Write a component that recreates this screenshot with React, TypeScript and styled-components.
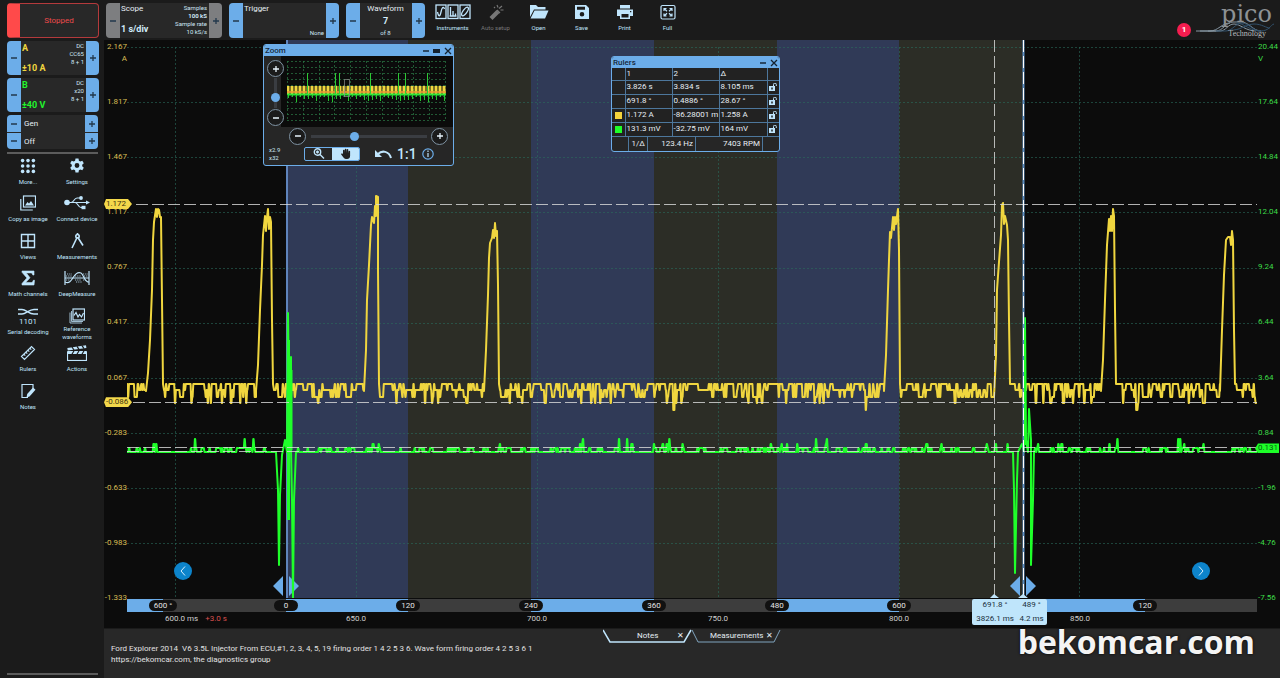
import React from "react";
import styled, { createGlobalStyle, css } from "styled-components";

const blue = "#6cade9";
const pale = "#c0e5fc";
const panel = "#282828";
const ui = 'Roboto, "Open Sans", sans-serif';

const Global = createGlobalStyle`
  * { box-sizing: border-box; }
  body { margin: 0; background: #1b1b1b; color: #e6eef4; font: 8px/10px ${ui}; }
  button, textarea, input { font: inherit; color: inherit; }
  button { padding: 0; border: 0; background: none; cursor: pointer; }
`;

/* ---------- page frame ---------- */

const Page = styled.div`
  display: grid;
  grid-template-columns: 104px minmax(0, 1fr);
  min-height: 100vh;
`;

const Sidebar = styled.aside`
  display: flex;
  flex-direction: column;
  padding: 3px 6px 3px 7px;
  gap: 3px;
`;

const Main = styled.main`
  display: grid;
  grid-template-rows: 40px minmax(0, 1fr) 50px;
  min-width: 0;
`;

const Toolbar = styled.header`
  display: flex;
  padding: 3px 6px 0 2px;
`;

/* ---------- channel and scope boxes ---------- */

const StopButton = styled.button`
  height: 35px;
  width: 92px;
  border: 1px solid #b43a3c;
  border-left: 13px solid #ff4a4a;
  border-radius: 4px;
  background: ${panel};
  color: #ec4a4b;
`;

const Box = styled.section<{ $w: number; $h?: number; $gap?: number }>`
  display: grid;
  grid-template-columns: 14px minmax(0, 1fr) 13px;
  width: ${(p) => p.$w}px;
  height: ${(p) => p.$h ?? 35}px;
  margin-right: ${(p) => p.$gap ?? 0}px;
  border-radius: 4px;
  overflow: hidden;
  background: ${panel};
`;

const Step = styled.button<{ $grey?: boolean }>`
  display: grid;
  place-items: center;
  background: ${(p) => (p.$grey ? "#7d7e80" : blue)};
  color: #22384c;
`;

const BoxBody = styled.div<{ $center?: boolean }>`
  display: flex;
  justify-content: ${(p) => (p.$center ? "center" : "space-between")};
  padding: 1px 2px 1px 1px;
  min-width: 0;
`;

const Stack = styled.div<{ $align?: string; $color?: string; $spread?: boolean }>`
  display: flex;
  flex-direction: column;
  align-items: ${(p) => p.$align ?? "flex-start"};
  justify-content: ${(p) => (p.$spread ? "space-between" : "flex-start")};
  color: ${(p) => p.$color ?? "#e6eef4"};
  white-space: nowrap;
`;

const Small = styled.span<{ $bold?: boolean }>`
  font-size: 6px;
  line-height: 8px;
  font-weight: ${(p) => (p.$bold ? 700 : 400)};
  color: #cfe6f5;
`;

const Value = styled.strong<{ $pale?: boolean }>`
  font-size: 9px;
  font-weight: 700;
  line-height: 12px;
  margin-bottom: ${(p) => (p.$pale ? 2 : 0)}px;
  color: ${(p) => (p.$pale ? "#d3edfc" : "inherit")};
`;

const GenBox = styled.section`
  display: grid;
  grid-template-columns: 14px minmax(0, 1fr) 13px;
  grid-template-rows: 17px 16px;
  row-gap: 1px;
  border-radius: 4px;
  overflow: hidden;
  background: ${panel};
`;

const GenText = styled.span`
  padding-left: 3px;
  line-height: 17px;
`;

const Rule = styled.hr`
  width: 91px;
  height: 2px;
  margin: 0;
  border: 0;
  background: #5c5c5c;
`;

/* ---------- tool buttons ---------- */

const ToolGrid = styled.nav`
  display: grid;
  grid-template-columns: 42px 56px;
  grid-template-rows: repeat(7, 1fr);
  height: 262px;
  margin: 1px 0 auto;
`;

const Tool = styled.button<{ $w?: number; $dim?: boolean; $tight?: boolean }>`
  display: flex;
  flex-direction: column;
  align-items: center;
  width: ${(p) => (p.$w ? p.$w + "px" : "auto")};
  color: ${(p) => (p.$dim ? "#777" : pale)};
  font-size: 6px;
  line-height: 8px;
  white-space: pre;
  svg { display: block; flex: none; margin-bottom: ${(p) => (p.$tight ? 1 : 4)}px; }
`;

const ToolRow = styled.nav`
  display: flex;
  margin-left: 6px;
`;

const Brand = styled.div`
  position: relative;
  margin-left: auto;
  width: 80px;
`;

const Wordmark = styled.span`
  position: absolute;
  right: 2px;
  top: -2px;
  font: 24px/26px "DejaVu Serif", serif;
  color: #8d9194;
`;

const Tagline = styled.span`
  position: absolute;
  right: 8px;
  top: 26px;
  font: 8px/10px "Liberation Serif", serif;
  color: #b9bcbe;
`;

const Waves = styled.svg`
  position: absolute;
  left: 2px;
  top: 16px;
`;

const Alert = styled.span`
  position: absolute;
  left: -17px;
  top: 20px;
  width: 14px;
  height: 14px;
  border-radius: 50%;
  background: #f51d4f;
  color: #fff;
  font-weight: 700;
  line-height: 14px;
  text-align: center;
`;

/* ---------- chart ---------- */

const Chart = styled.section`
  position: relative;
  display: grid;
  grid-template-columns: 23px minmax(0, 1fr) 23px;
  grid-template-rows: minmax(0, 1fr) 14px 16px;
  background: #0c0c0c;
  min-height: 400px;
`;

const Axis = styled.div<{ $side: "left" | "right" }>`
  display: flex;
  flex-direction: column;
  justify-content: space-between;
  margin: 2px 0 -5px;
  color: ${(p) => (p.$side === "left" ? "#d9bd55" : "#3ddb48")};
  white-space: nowrap;
`;

const Mark = styled.span<{ $side: "left" | "right" }>`
  display: flex;
  flex-direction: column;
  align-items: ${(p) => (p.$side === "left" ? "flex-end" : "flex-start")};
  gap: 2px;
  height: 10px;
  padding-left: 1px;
`;

const PlotArea = styled.div`
  position: relative;
  min-width: 0;
  svg { position: absolute; inset: 0; width: 100%; height: 100%; }
  path, line { vector-effect: non-scaling-stroke; }
`;

const Strip = styled.div`
  position: relative;
  grid-column: 2;
  display: flex;
  margin-top: 1px;
`;

const Segment = styled.div<{ $grow: number; $on?: boolean }>`
  display: flex;
  align-items: center;
  flex: ${(p) => p.$grow} 1 0;
  width: 0;
  background: ${(p) => (p.$on ? blue : "#3d3d3d")};
`;

const Anchor = styled.span`
  display: flex;
  flex: none;
  justify-content: center;
  width: 0;
  z-index: 1;
`;

const Pill = styled.span`
  flex: none;
  min-width: 24px;
  padding: 0 5px;
  border-radius: 6px;
  background: #111;
  color: #e4e4e4;
  line-height: 11px;
  text-align: center;
  white-space: nowrap;
`;

const TimeRow = styled.div`
  grid-column: 2;
  display: flex;
  align-items: center;
  padding-bottom: 2px;
  color: #d0d0d0;
`;

const TimeCell = styled.div<{ $grow: number }>`
  display: flex;
  flex: ${(p) => p.$grow} 1 0;
  width: 0;
`;

const TimeLabel = styled.span`
  flex: none;
  white-space: nowrap;
`;

const Trail = styled.span`
  display: flex;
  gap: 7px;
  padding-left: 12px;
  white-space: nowrap;
  em { font-style: normal; color: #d8504e; }
`;

const FlagSpot = styled.div<{ $top: number }>`
  position: absolute;
  left: -23px;
  right: -22px;
  top: ${(p) => p.$top}%;
  display: flex;
  margin-top: -5px;
`;

const Flag = styled.span<{ $green?: boolean }>`
  line-height: 10px;
  ${(p) =>
    p.$green
      ? css`width: 24px; margin-left: auto; padding-left: 3px; background: #1dff28; color: #0a5a10;
          clip-path: polygon(0 50%, 3px 0, 100% 0, 100% 100%, 3px 100%);`
      : css`width: 28px; padding-left: 2px; background: #f3d84b; color: #3d3410;
          clip-path: polygon(2px 0, 24px 0, 100% 50%, 24px 100%, 2px 100%, 0 50%);`}
`;

const RulerCard = styled.div`
  position: absolute;
  z-index: 3;
  left: 74.75%;
  top: 0;
  width: 75px;
  height: 26px;
  padding: 1px 3px;
  display: grid;
  grid-template-columns: 1fr auto;
  column-gap: 4px;
  justify-items: center;
  align-content: space-between;
  border-radius: 2px;
  background: #bfe5fb;
  color: #20303c;
  white-space: nowrap;
`;

const PageButton = styled.button<{ $side: "left" | "right" }>`
  position: absolute;
  z-index: 2;
  bottom: 18px;
  ${(p) => (p.$side === "left" ? "left: 47px;" : "right: 47px;")}
  width: 18px;
  height: 18px;
  border-radius: 50%;
  background: #0d84cb;
  display: grid;
  place-items: center;
  && svg { position: static; width: 10px; height: 12px; }
`;

/* ---------- floating windows ---------- */

const Win = styled.section<{ $x: number; $y: number; $w: number }>`
  position: absolute;
  z-index: 5;
  left: ${(p) => p.$x}px;
  top: ${(p) => p.$y}px;
  width: ${(p) => p.$w}px;
  border: 1px solid ${blue};
  border-radius: 3px;
  background: #262626;
  overflow: hidden;
`;

const WinBar = styled.header`
  display: flex;
  align-items: center;
  height: 11px;
  padding: 0 0 0 1px;
  background: ${blue};
  color: #16283a;
  h2 { margin: 0 auto 0 0; font: inherit; font-weight: 500; }
  button { display: grid; place-items: center; width: 11px; height: 11px; }
`;

const ZoomTop = styled.div`
  display: grid;
  grid-template-columns: 17px 1fr;
  height: 71px;
`;

const ZoomSide = styled.div`
  display: flex;
  flex-direction: column;
  align-items: center;
  justify-content: space-between;
  margin: 4px -5px 1px 1px;
  z-index: 1;
`;

const Overview = styled.div`
  padding: 5px 6px;
  background: #0b0b0b;
  svg { display: block; }
`;

const Round = styled.button`
  display: grid;
  place-items: center;
  flex: none;
  width: 17px;
  height: 17px;
  border: 1px solid #7f93a3;
  border-radius: 50%;
  background: #1b1b1b;
  color: #e8f4fc;
`;

const thumb = css`
  appearance: none;
  width: 9px;
  height: 9px;
  border: 0;
  border-radius: 50%;
  background: ${blue};
`;

const Slider = styled.input<{ $vertical?: boolean }>`
  appearance: none;
  margin: 0;
  background: transparent;
  ${(p) =>
    p.$vertical
      ? css`writing-mode: vertical-lr; direction: rtl; width: 9px; height: 30px;`
      : css`width: 116px; height: 9px;`}
  &::-webkit-slider-runnable-track {
    background: linear-gradient(#3a3d42, #3a3d42) center / ${(p) => (p.$vertical ? "3px 100%" : "100% 3px")} no-repeat;
  }
  &::-webkit-slider-thumb { ${thumb} }
`;

const ZoomRow = styled.div`
  display: flex;
  align-items: center;
  justify-content: space-between;
  height: 18px;
  padding: 0 5px 0 25px;
`;

const ZoomFoot = styled.div`
  display: grid;
  grid-template-columns: 30px 56px auto auto auto;
  column-gap: 5px;
  justify-content: start;
  align-items: center;
  height: 20px;
  padding: 0 0 3px 5px;
`;

const Toggle = styled.div`
  display: flex;
  border: 1px solid ${blue};
  border-radius: 2px;
  overflow: hidden;
`;

const ToggleButton = styled.button<{ $on?: boolean }>`
  display: grid;
  place-items: center;
  flex: 1;
  height: 12px;
  background: ${(p) => (p.$on ? pale : "transparent")};
  color: ${(p) => (p.$on ? "#222" : pale)};
`;

const FootButton = styled.button<{ $first?: boolean }>`
  display: grid;
  place-items: center;
  margin-left: ${(p) => (p.$first ? 10 : 0)}px;
  color: ${pale};
  font-size: 14px;
  font-weight: 500;
  line-height: 14px;
`;

const RulerTable = styled.table`
  width: 100%;
  table-layout: fixed;
  border-collapse: collapse;
  line-height: 12px;
  th, td {
    height: 14px;
    padding: 0 1px;
    border: 1px solid #4d779c;
    text-align: left;
    font-weight: 400;
    white-space: nowrap;
    overflow: hidden;
    background: #222;
  }
  th { height: 12px; line-height: 10px; border-top: 0; }
  tr > :first-child { border-left: 0; }
  tr > :last-child { border-right: 0; }
  svg { display: block; margin: auto; }
`;

const Swatch = styled.span<{ $c: string }>`
  display: block;
  width: 7px;
  height: 7px;
  margin: auto;
  background: ${(p) => p.$c};
`;

const RulerFoot = styled.div`
  display: grid;
  grid-template-columns: 20px 48px 67px;
  padding: 0 17px 0 16px;
  height: 14px;
  line-height: 14px;
  span { border-right: 1px solid #4d779c; text-align: right; padding-right: 2px; }
  span:first-child { border-left: 1px solid #4d779c; }
`;

/* ---------- notes ---------- */

const Notes = styled.section`
  position: relative;
  display: grid;
  grid-template-rows: 14px 1fr;
  border-top: 1px solid #1b1b1b;
  background: ${panel};
`;

const Tabs = styled.div`
  display: flex;
  justify-content: center;
`;

const TabItem = styled.div<{ $w: number; $on?: boolean }>`
  position: relative;
  display: flex;
  align-items: center;
  justify-content: space-between;
  width: ${(p) => p.$w}px;
  padding: 0 8px 0 ${(p) => (p.$on ? 34 : 18)}px;
  svg { position: absolute; inset: 0; }
  button { position: relative; }
`;

const NoteText = styled.textarea`
  padding: 0 7px;
  border: 0;
  resize: none;
  outline: 0;
  background: transparent;
  line-height: 11px;
  color: #e2e2e2;
  overflow: hidden;
`;

const Watermark = styled.strong`
  position: absolute;
  right: 25px;
  bottom: 21px;
  font: 700 32px/30px "Open Sans", sans-serif;
  color: #f4f4f4;
  text-shadow: 0 0 3px #000;
`;

/* ---------- icons ---------- */

const Plus = () => (
  <svg width="8" height="8" viewBox="0 0 8 8" stroke="currentColor" strokeWidth="1.3"><path d="M1 4h6M4 1v6" /></svg>
);
const Minus = () => (
  <svg width="8" height="8" viewBox="0 0 8 8" stroke="currentColor" strokeWidth="1.3"><path d="M1 4h6" /></svg>
);

const Ico = ({ children, w = 16, h = 16, vb = "0 0 16 16", sw = 1.2 }: { children: React.ReactNode; w?: number; h?: number; vb?: string; sw?: number }) => (
  <svg width={w} height={h} viewBox={vb} fill="none" stroke="currentColor" strokeWidth={sw}>{children}</svg>
);

const icons: Record<string, React.ReactNode> = {
  more: <Ico><g fill="currentColor" stroke="none">{[2.6, 8, 13.4].flatMap((y) => [2.6, 8, 13.4].map((x) => <circle key={x + "-" + y} cx={x} cy={y} r="1.8" />))}</g></Ico>,
  settings: <Ico><path fill="currentColor" stroke="none" fillRule="evenodd" d="M6.500.6h3l.4 2.100 1.400.8 2-.8 1.500 2.600-1.600 1.400v1.600l1.600 1.400-1.500 2.600-2-.8-1.400.8-.4 2.100h-3l-.4-2.100-1.400-.8-2 .8L1.200 9.700 2.800 8.300V6.700L1.200 5.300l1.500-2.600 2 .8 1.400-.8zM8 5.100a2.400 2.400 0 1 0 0 4.800 2.400 2.400 0 0 0 0-4.800z" /></Ico>,
  copy: <Ico><rect x="3.5" y="1" width="12" height="11" /><path d="M.8 4v11h12" /><path d="M5 10.500l2.500-3.500 1.500 1.500L11 6l3 4.500z" fill="currentColor" stroke="none" /></Ico>,
  usb: <Ico w={28} vb="0 0 28 16"><circle cx="4" cy="7.5" r="2.8" fill="currentColor" stroke="none" /><path d="M4 7.500h20M8 7.500c3 0 3-4.500 6-4.500h3M12 7.500c3 0 3 5 6 5h2" /><path d="M27 7.500l-4-2v4z" fill="currentColor" stroke="none" /><circle cx="18" cy="3" r="1.9" fill="currentColor" stroke="none" /><rect x="18.500" y="10.800" width="4" height="3.400" fill="currentColor" stroke="none" /></Ico>,
  views: <Ico sw={1.4}><path d="M1.500 1.500h13v13h-13zM8 1.500v13M1.500 8h13" /></Ico>,
  compass: <Ico sw={1.6}><circle cx="8.5" cy="3.2" r="1.7" /><path d="M7.800 5L3 15M9.200 5L14 12.500M8.500 1V0" /></Ico>,
  sigma: <Ico><path fill="currentColor" stroke="currentColor" strokeWidth=".6" d="M2 1h12v4h-1.200C12.500 3.500 12 2.900 10.500 2.900H6.300L10 7.800 5.700 12.600h5.200c1.500 0 2-.7 2.400-2.300h1.200L14 15H2v-1.500l4.900-5.600L2 2.300z" /></Ico>,
  deep: <Ico w={26} vb="0 0 26 16" sw={1.2}><path d="M1 1v14M25 1v14M1 8h24" /><path d="M1 12C5 14 7 11 9.500 7S14 1.500 17 3s3 9 8 9" /><path d="M2 6h6M3 4h5M2 10h4M11 10h6M12 12h6M20 6h4M19 4h5M11 6h6M19 10h3" strokeDasharray="1.2 1" strokeWidth=".8" /></Ico>,
  serial: <Ico w={20} vb="0 0 20 16"><path d="M0 1.500h4c4 0 7 4.500 12 4.500h4M0 6h4c4 0 7-4.500 12-4.500h4" strokeWidth="1.5" /><text x="10" y="15.5" fontSize="8" textAnchor="middle" fill="currentColor" stroke="none">1101</text></Ico>,
  refw: <Ico><rect x="4" y="1" width="11.5" height="11" /><path d="M1 4.500V15h12M2.500 3v10.500H14" strokeWidth=".8" /><path d="M5 7.500l2-3 2 4.500 1.500-2.500L12.500 9 14.500 5" /></Ico>,
  ruler: <Ico><path d="M1.500 11.500l10-10 3 3-10 10zM4 9.300l1.300 1.300M6 7.300l1.300 1.300M8 5.300l1.300 1.300M10 3.300l1.300 1.300" /></Ico>,
  actions: <Ico w={20} vb="0 0 20 16"><rect x="0.5" y="7" width="19" height="8.5" /><rect x="0.5" y="6" width="19" height="3" fill="currentColor" stroke="none" /><path d="M.3 3L19 .3l.4 2.700L.8 5.600z" fill="currentColor" stroke="none" /><path d="M5 2l2 3M10 1.300l2 3M15 .6l2 3M5 9l2-3M10 9l2-3M15 9l2-3" stroke="#1b1b1b" /></Ico>,
  notes: <Ico><path d="M13 8V1.500H2v13h6" /><path d="M6.500 14.500l.7-3.500L13 4.500l2.500 2.300-6 6.700z" fill="currentColor" stroke="none" /></Ico>,
  instruments: <Ico w={36} h={17} vb="0 0 36 17" sw={1.3}><rect x="1" y="2" width="10" height="13.5" /><rect x="13" y="2" width="10" height="13.5" /><rect x="25" y="2" width="10" height="13.5" /><path d="M2.500 9c1 5 2.500 5 3.500 0S8.500 3 9.500 6M15.500 4v9M18 8v5M20.500 10.500V13M14.500 13h7" /><ellipse cx="30" cy="8.500" rx="2" ry="5" transform="rotate(35 30 8.500)" /></Ico>,
  auto: <Ico h={17}><path d="M1.500 13.500L8.500 6.500l3 3-7 7z" fill="currentColor" stroke="none" /><path d="M9 6.500l3 3M11 5l3-2.500M10 4l-1-2.500M12.500 6.500h3M6 3.500l1 1" /></Ico>,
  open: <Ico w={20} h={17} vb="0 0 20 17"><path d="M1 14V2h6l2 2h7.500v2.500H5z" fill="currentColor" stroke="none" /><path d="M1.500 15.500L5.500 7.500h14L16 15.500z" fill="currentColor" stroke="none" /></Ico>,
  save: <Ico h={17}><path fill="currentColor" stroke="none" fillRule="evenodd" d="M1 1.500h11l3 3v11H1zM3 3.300v3h8v-3zM8 8.500a2.300 2.300 0 1 0 0 4.600A2.300 2.300 0 0 0 8 8.500z" /></Ico>,
  print: <Ico h={17}><path fill="currentColor" stroke="none" fillRule="evenodd" d="M3 1.500h10V5H3zM0 6h16v6.500h-3v3H3v-3H0zM4.500 10.500V14h7v-3.500zM13 7.500v1.300h1.300V7.500z" /></Ico>,
  full: <Ico h={17}><rect x="1" y="2" width="14" height="13.5" rx="1.500" /><path d="M4 7.500V5h2.500M4.300 5.300L7 7.800M9.500 5H12v2.500M11.700 5.300L9 7.800M4 10v2.500h2.500M4.300 12.200L7 9.700M9.500 12.500H12V10M11.700 12.200L9 9.700" /></Ico>,
};

const sideTools: [string, string][] = [
  ["more", "More..."], ["settings", "Settings"],
  ["copy", "Copy as image"], ["usb", "Connect device"],
  ["views", "Views"], ["compass", "Measurements"],
  ["sigma", "Math channels"], ["deep", "DeepMeasure"],
  ["serial", "Serial decoding"], ["refw", "Reference\nwaveforms"],
  ["ruler", "Rulers"], ["actions", "Actions"],
  ["notes", "Notes"],
];

const topTools: [string, string][] = [
  ["instruments", "Instruments"], ["auto", "Auto setup"], ["open", "Open"],
  ["save", "Save"], ["print", "Print"], ["full", "Full"],
];

/* ---------- signal data ---------- */

function random(seed: number) {
  let s = seed;
  return () => {
    s = (s * 1664525 + 1013904223) >>> 0;
    return s / 4294967296;
  };
}

type Pt = [number, number];

const pulses: Pt[][] = [
  [[146, 391], [148, 373], [150, 340], [152, 290], [153, 240], [154, 222], [156, 209], [157, 217], [158, 209], [159, 210], [160, 217], [161, 217], [162, 300], [163, 384]],
  [[256, 391], [258, 365], [260, 310], [262, 265], [263, 235], [265, 216], [266, 231], [267, 217], [268, 209], [269, 229], [270, 217], [271, 222], [272, 320], [273, 384]],
  [[364, 391], [366, 350], [367, 300], [369, 265], [371, 225], [372, 217], [374, 223], [375, 206], [376, 216], [376, 196], [378, 197], [378, 270], [379, 384]],
  [[484, 391], [486, 350], [488, 295], [489, 258], [490, 243], [492, 238], [493, 230], [494, 238], [495, 223], [496, 236], [497, 231], [498, 285], [499, 384]],
  [[884, 391], [886, 355], [888, 290], [889, 260], [890, 232], [891, 238], [893, 217], [894, 230], [895, 217], [896, 224], [898, 209], [899, 250], [900, 384]],
  [[994, 397], [996, 355], [997, 290], [999, 262], [1001, 235], [1002, 205], [1003, 203], [1004, 224], [1005, 216], [1007, 225], [1008, 240], [1009, 320], [1010, 384]],
  [[1101, 391], [1103, 360], [1105, 300], [1107, 245], [1109, 219], [1110, 231], [1111, 216], [1112, 231], [1113, 209], [1114, 216], [1115, 310], [1116, 384]],
  [[1220, 391], [1222, 330], [1224, 275], [1226, 240], [1228, 237], [1230, 237], [1231, 245], [1232, 231], [1233, 240], [1234, 330], [1235, 384]],
];

const kicks: Pt[][] = [
  [[276, 452], [278, 490], [279, 565], [280, 495], [282, 455], [285, 440], [287, 452], [288, 313], [289, 395], [290, 410], [291, 357], [291, 450], [292, 500], [293, 598], [294, 500], [296, 452]],
  [[1013, 452], [1014, 490], [1015, 573], [1017, 480], [1018, 452], [1022, 444], [1024, 452], [1025, 318], [1026, 440], [1028, 452], [1029, 409], [1031, 440], [1031, 565], [1033, 500], [1034, 452]],
];

/* Each level is [share of samples, y, longest run in px]. */
type Level = [number, number, number];

function trace(seed: number, shapes: Pt[][], levels: Level[]) {
  const r = random(seed);
  const out: Pt[] = [];
  let x = 127;
  let i = 0;
  while (x < 1257) {
    const shape = shapes[i];
    if (shape && x >= shape[0][0]) {
      out.push(...shape);
      x = shape[shape.length - 1][0] + 1;
      i += 1;
      continue;
    }
    let pick = r();
    const [, y, run] = levels.find(([share]) => (pick -= share) < 0) ?? levels[0];
    const end = Math.min(x + 0.3 + (r() < 0.25 ? r() * run : 0), shape ? shape[0][0] : 1257);
    out.push([x, y], [end, y]);
    x = end + 0.7;
  }
  return "M" + out.map(([a, b]) => `${a.toFixed(1)} ${b}`).join("L");
}

const currentTrace = trace(57, pulses, [[0.4, 384, 5], [0.3, 390, 3], [0.23, 397, 2], [0.062, 403, 1], [0.008, 410, 1]]);
const voltTrace = trace(23, kicks, [[0.61, 452, 7], [0.31, 448, 2], [0.065, 444, 1], [0.015, 439, 0]]);

const bands: [number, number, string][] = [
  [286, 122, "#303a57"], [408, 123, "#2c2d26"], [531, 123, "#303a57"],
  [654, 123, "#2c2d26"], [777, 122, "#303a57"], [899, 124, "#2c2d26"],
];

const gridX = [175.5, 356.5, 537.5, 718.5, 899.5, 1079.5];
const gridY = [47.5, 102.5, 157.5, 212.5, 268.5, 323.5, 378.5, 433.5, 488.5, 543.5];

function Signals() {
  return (
    <svg viewBox="127 40 1130 558" preserveAspectRatio="none" role="img" aria-label="Injector current and voltage">
      {bands.map(([x, w, c]) => <rect key={x} x={x} y="40" width={w} height="558" fill={c} />)}
      <g stroke="#2a6b5c" strokeOpacity=".6" strokeDasharray="2 2">
        {gridX.map((x) => <line key={x} x1={x} x2={x} y1="47" y2="598" />)}
        {gridY.map((y) => <line key={y} x1="127" x2="1257" y1={y} y2={y} />)}
      </g>
      <path d="M287 40V598" stroke="#5f84bb" strokeWidth="2" />
      <path d="M273 586l10-10v20zM299 586l-10-10v20zM1010 586l10-10v20zM1036 586l-10-10v20z" fill={blue} />
      <g fill="none" strokeLinejoin="round" strokeWidth="2">
        <path d={currentTrace} stroke="#f0d63f" />
        <path d={voltTrace} stroke="#1fff2a" />
      </g>
      <path d="M288.500 340v180M291 370v80" stroke="#1fff2a" strokeWidth="3" />
      <path d="M1023.500 40V598" stroke="#5d8fc4" strokeWidth="2" />
      <path d="M1025 330v115" stroke="#1fff2a" strokeWidth="2" />
      <g stroke="#dcdcdc" strokeOpacity=".8" strokeDasharray="12 4">
        <path d="M136 204.500H1257M133 402.500H1257M127 447.500H1257M127 451.500H1257M994.500 40V598" />
      </g>
      <path d="M1023.500 40V598" stroke="#fff" strokeDasharray="12 4" />
      <path d="M990 598l4-4 5 4zM1018 598l5-4 5 4z" fill="#bfe5fb" />
    </svg>
  );
}

function OverviewPlot() {
  const r = random(9);
  const bars: string[] = [];
  const dips: string[] = [];
  for (let x = 1; x < 158; x += 4) {
    bars.push(`M${x} 25v9`);
    dips.push(`M${x + 0.5} 34v${Math.round(2 + r() * 5)}`);
  }
  return (
    <svg width="159" height="60" viewBox="0 0 159 60" fill="none" role="img" aria-label="Whole capture">
      <g stroke="#2b7a46" strokeDasharray="2 2" strokeOpacity=".7">
        {Array.from({ length: 11 }, (_, i) => <path key={"x" + i} d={`M${Math.round(i * 15.8) + 0.5} 0V59`} />)}
        {Array.from({ length: 11 }, (_, i) => <path key={"y" + i} d={`M0 ${Math.round(i * 5.9) + 0.5}H159`} />)}
      </g>
      <path d={bars.join("")} stroke="#f0d63f" strokeWidth="3" />
      <path d="M0 31H159" stroke="#e79a35" strokeOpacity=".8" strokeWidth="2" />
      <path d={dips.join("")} stroke="#22c92c" strokeWidth="1" />
      <path d="M20.500 12v22M48.500 12v22M52.500 12v22M83.500 12v22M111.500 12v22M118.500 12v22M140.500 12v22" stroke="#2cc934" />
      <path d="M0 33.500H159" stroke="#2fe639" strokeWidth="2" />
      <rect x="57.5" y="18.5" width="5" height="17" stroke="#8d8d8d" strokeOpacity=".7" />
    </svg>
  );
}

/* ---------- parts ---------- */

const leftMarks = ["2.167", "1.817", "1.467", "1.117", "0.767", "0.417", "0.067", "-0.283", "-0.633", "-0.983", "-1.333"];
const rightMarks = ["20.44", "17.64", "14.84", "12.04", "9.24", "6.44", "3.64", "0.84", "-1.96", "-4.76", "-7.56"];

const segments: [number, boolean, string][] = [
  [36, true, ""], [123, false, "600 °"], [122, true, "0"], [123, false, "120"], [123, true, "240"], [123, false, "360"],
  [122, true, "480"], [124, false, "600"], [122, true, ""], [112, false, "120"],
];

const times: [number, string][] = [[48, ""], [181, "600.0"], [181, "650.0"], [181, "700.0"], [181, "750.0"], [181, "800.0"], [177, "850.0"]];

const rulerRows: [string, string, string, string][] = [
  ["", "3.826 s", "3.834 s", "8.105 ms"],
  ["", "691.8 °", "0.4886 °", "28.67 °"],
  ["#f3d33c", "1.172 A", "-86.28001 m", "1.258 A"],
  ["#1fff2a", "131.3 mV", "-32.75 mV", "164 mV"],
];

const Lock = () => (
  <svg width="8" height="8" viewBox="0 0 8 8" fill="none" stroke={pale}><path d="M0 3h6v5H0z" fill={pale} stroke="none" /><path d="M4.500 3V1.500a1.400 1.400 0 0 1 2.800 0V3" /><path d="M3 4.500v2" stroke="#222" strokeWidth="1.5" /></svg>
);

const CloseIcon = () => <svg width="8" height="8" viewBox="0 0 8 8" stroke="#14222f" strokeWidth="1.3"><path d="M1 1l6 6M7 1L1 7" /></svg>;

function Channel({ name, range, color, probe }: { name: string; range: string; color: string; probe: string }) {
  return (
    <Box $w={92} $h={34}>
      <Step aria-label={`Channel ${name} lower range`}><Minus /></Step>
      <BoxBody>
        <Stack $color={color} $spread><Value>{name}</Value><Value>{range}</Value></Stack>
        <Stack $align="flex-end"><Small>DC</Small><Small>{probe}</Small><Small>8 + 1</Small></Stack>
      </BoxBody>
      <Step aria-label={`Channel ${name} higher range`}><Plus /></Step>
    </Box>
  );
}

function ZoomWindow() {
  return (
    <Win $x={159} $y={4} $w={191}>
      <WinBar>
        <h2>Zoom</h2>
        <button aria-label="Minimise"><Minus /></button>
        <button aria-label="Restore"><svg width="7" height="4"><rect width="7" height="4" fill="#14222f" /></svg></button>
        <button aria-label="Close"><CloseIcon /></button>
      </WinBar>
      <ZoomTop>
        <ZoomSide>
          <Round aria-label="Zoom in vertically"><Plus /></Round>
          <Slider $vertical type="range" aria-label="Vertical zoom" defaultValue={30} />
          <Round aria-label="Zoom out vertically"><Minus /></Round>
        </ZoomSide>
        <Overview><OverviewPlot /></Overview>
      </ZoomTop>
      <ZoomRow>
        <Round aria-label="Zoom out"><Minus /></Round>
        <Slider type="range" aria-label="Horizontal zoom" defaultValue={37} />
        <Round aria-label="Zoom in"><Plus /></Round>
      </ZoomRow>
      <ZoomFoot>
        <Stack><Small>x2.9</Small><Small>x32</Small></Stack>
        <Toggle>
          <ToggleButton aria-label="Magnify"><svg width="12" height="11" viewBox="0 0 12 11" fill="none" stroke="currentColor" strokeWidth="1.4"><circle cx="4.5" cy="4" r="3.2" /><path d="M7 6.500l4 4M4.500 2.500v3M3 4h3" /></svg></ToggleButton>
          <ToggleButton $on aria-label="Pan"><svg width="12" height="11" viewBox="0 0 12 11" fill="currentColor"><path d="M3 6V2.500a.8.8 0 0 1 1.600 0V5l.2-3.500a.8.8 0 0 1 1.600 0V5l.3-3.200a.8.8 0 0 1 1.600 0V5.500l.3-2.300a.8.8 0 0 1 1.500 0V8c0 2-1.300 3-3 3H6C4.500 11 3.500 9.500 1.200 6.500c-.4-.8.6-1.400 1.800-.5z" /></svg></ToggleButton>
        </Toggle>
        <FootButton $first aria-label="Undo zoom"><svg width="17" height="10" viewBox="0 0 17 10" fill="none" stroke="currentColor" strokeWidth="2"><path d="M3 5c4-4 11-3 13 4" /><path d="M0 1v7h7z" fill="currentColor" stroke="none" /></svg></FootButton>
        <FootButton>1:1</FootButton>
        <FootButton aria-label="Information"><svg width="12" height="12" viewBox="0 0 12 12" fill="none" stroke={blue} strokeWidth="1.2"><circle cx="6" cy="6" r="5.2" /><path d="M6 5v4M6 2.600v1.400" stroke={pale} /></svg></FootButton>
      </ZoomFoot>
    </Win>
  );
}

function RulersWindow() {
  return (
    <Win $x={507} $y={16} $w={169}>
      <WinBar>
        <h2>Rulers</h2>
        <button aria-label="Minimise"><Minus /></button>
        <button aria-label="Close"><CloseIcon /></button>
      </WinBar>
      <RulerTable>
        <colgroup><col width="13" /><col width="47" /><col width="47" /><col width="48" /><col width="12" /></colgroup>
        <thead><tr><th /><th>1</th><th>2</th><th>Δ</th><th /></tr></thead>
        <tbody>
          {rulerRows.map(([c, a, b, d]) => (
            <tr key={a}><td>{c && <Swatch $c={c} />}</td><td>{a}</td><td>{b}</td><td>{d}</td><td><Lock /></td></tr>
          ))}
        </tbody>
      </RulerTable>
      <RulerFoot><span>1/Δ</span><span>123.4 Hz</span><span>7403 RPM</span></RulerFoot>
    </Win>
  );
}

export default function App() {
  return (
    <>
      <Global />
      <Page>
        <Sidebar>
          <StopButton>Stopped</StopButton>
          <Channel name="A" range="±10 A" color="#f0d63f" probe="CC65" />
          <Channel name="B" range="±40 V" color="#22f52d" probe="x20" />
          <GenBox>
            <Step aria-label="Previous generator mode"><Minus /></Step><GenText>Gen</GenText><Step aria-label="Next generator mode"><Plus /></Step>
            <Step aria-label="Lower generator output"><Minus /></Step><GenText>Off</GenText><Step aria-label="Raise generator output"><Plus /></Step>
          </GenBox>
          <Rule />
          <ToolGrid>
            {sideTools.map(([icon, label]) => <Tool key={icon} $tight={icon === "refw"}>{icons[icon]}{label}</Tool>)}
          </ToolGrid>
          <Rule />
        </Sidebar>

        <Main>
          <Toolbar>
            <Box $w={116} $gap={7}>
              <Step $grey aria-label="Shorter timebase"><Minus /></Step>
              <BoxBody>
                <Stack $spread><span>Scope</span><Value $pale>1 s/div</Value></Stack>
                <Stack $align="flex-end"><Small>Samples</Small><Small $bold>100 kS</Small><Small>Sample rate</Small><Small>10 kS/s</Small></Stack>
              </BoxBody>
              <Step $grey aria-label="Longer timebase"><Plus /></Step>
            </Box>
            <Box $w={110} $gap={7}>
              <Step aria-label="Previous trigger"><Minus /></Step>
              <BoxBody>
                <Stack><span>Trigger</span></Stack>
                <Stack $align="flex-end" $spread><span /><Small>None</Small></Stack>
              </BoxBody>
              <Step aria-label="Next trigger"><Plus /></Step>
            </Box>
            <Box $w={79}>
              <Step aria-label="Previous waveform"><Minus /></Step>
              <BoxBody $center>
                <Stack $align="center" $spread><span>Waveform</span><Value $pale>7</Value><Small>of 8</Small></Stack>
              </BoxBody>
              <Step aria-label="Next waveform"><Plus /></Step>
            </Box>
            <ToolRow>
              {topTools.map(([icon, label]) => <Tool key={icon} $w={43} $dim={icon === "auto"}>{icons[icon]}{label}</Tool>)}
            </ToolRow>
            <Brand>
              <Waves width="78" height="14" viewBox="0 0 78 14" fill="none" strokeWidth="1">
                <path d="M0 12h14c8 0 12-8 20-8M4 12h16c7 0 10-9 17-9h8c8 0 12 9 20 9M12 12h12c6 0 8-7 14-7s12 7 22 7" stroke="#8797a3" />
                <path d="M20 12h10c6 0 10-8 16-8s12 8 18 8M40 4c8 0 14 8 24 8s10-6 14-7M34 11c10 1 16-6 24-6s12 4 16 4" stroke="#31506a" />
              </Waves>
              <Wordmark>pico</Wordmark>
              <Tagline>Technology</Tagline>
              <Alert>1</Alert>
            </Brand>
          </Toolbar>

          <Chart>
            <Axis $side="left">
              {leftMarks.map((m, i) => <Mark key={m} $side="left"><span>{m}</span>{i === 0 && <span>A</span>}</Mark>)}
            </Axis>
            <PlotArea>
              <Signals />
              <FlagSpot $top={29.4}><Flag>1.172</Flag></FlagSpot>
              <FlagSpot $top={64.9}><Flag>-0.086</Flag></FlagSpot>
              <FlagSpot $top={73.2}><Flag $green>0.131</Flag></FlagSpot>
              <PageButton $side="left" aria-label="Earlier"><svg viewBox="0 0 10 12" fill="none" stroke="#d8f0ff"><path d="M7 1.500L3 6l4 4.500" /></svg></PageButton>
              <PageButton $side="right" aria-label="Later"><svg viewBox="0 0 10 12" fill="none" stroke="#d8f0ff"><path d="M3 1.500L7 6l-4 4.500" /></svg></PageButton>
            </PlotArea>
            <Axis $side="right">
              {rightMarks.map((m, i) => <Mark key={m} $side="right"><span>{m}</span>{i === 0 && <span>V</span>}</Mark>)}
            </Axis>
            <Strip>
              {segments.map(([grow, on, label], i) => (
                <Segment key={i} $grow={grow} $on={on}>{label && <Anchor><Pill>{label}</Pill></Anchor>}</Segment>
              ))}
              <RulerCard><span>691.8 °</span><span>489 °</span><span>3826.1 ms</span><span>4.2 ms</span></RulerCard>
            </Strip>
            <TimeRow>
              {times.map(([grow, label], i) => (
                <TimeCell key={i} $grow={grow}>
                  {label && <Anchor><TimeLabel>{label}</TimeLabel></Anchor>}
                  {i === 1 && <Trail><span>ms</span><em>+3.0 s</em></Trail>}
                </TimeCell>
              ))}
            </TimeRow>
            <ZoomWindow />
            <RulersWindow />
          </Chart>

          <Notes>
            <Tabs>
              <TabItem $w={89} $on>
                <svg width="89" height="14" fill="none" stroke={pale} strokeWidth="1.5"><path d="M0 1l7 12h74l7-12" /></svg>
                <span>Notes</span><button aria-label="Close Notes">✕</button>
              </TabItem>
              <TabItem $w={89}>
                <svg width="89" height="14" fill="none" stroke="#7fa3bd"><path d="M0 1l6 12h76l6-12" /></svg>
                <span>Measurements</span><button aria-label="Close Measurements">✕</button>
              </TabItem>
            </Tabs>
            <NoteText
              aria-label="Notes"
              defaultValue={"Ford Explorer 2014  V6 3.5L Injector From ECU,#1, 2, 3, 4, 5, 19 firing order 1 4 2 5 3 6. Wave form firing order 4 2 5 3 6 1\nhttps://bekomcar.com, the diagnostics group"}
            />
            <Watermark>bekomcar.com</Watermark>
          </Notes>
        </Main>
      </Page>
    </>
  );
}
